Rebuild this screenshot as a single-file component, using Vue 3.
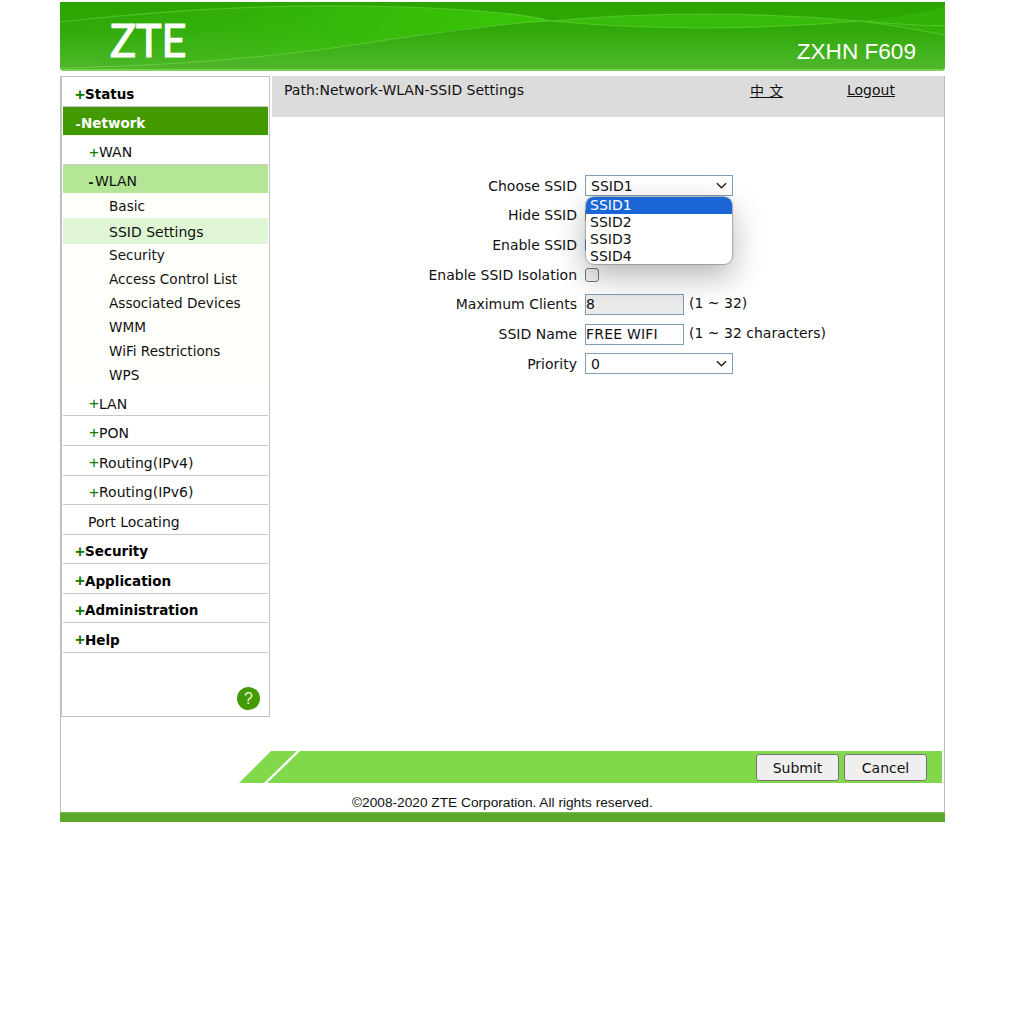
<script setup>
const topRows = [
  { label: 'Status', sign: '+', cls: 'lv1', h: 29 },
  { label: 'Network', sign: '-', cls: 'lv1 open', h: 29 },
  { label: 'WAN', sign: '+', cls: 'lv2', h: 29 },
  { label: 'WLAN', sign: '-', cls: 'lv2 open2', h: 28 },
]
const subRows = [
  { label: 'Basic', h: 25 },
  { label: 'SSID Settings', h: 26, cls: 'active' },
  { label: 'Security', h: 24, cls: 'lift' },
  { label: 'Access Control List', h: 24, cls: 'lift' },
  { label: 'Associated Devices', h: 24, cls: 'lift' },
  { label: 'WMM', h: 24, cls: 'lift' },
  { label: 'WiFi Restrictions', h: 24, cls: 'lift' },
  { label: 'WPS', h: 24, cls: 'lift' },
]
const lowRows = [
  { label: 'LAN', sign: '+', cls: 'lv2', h: 28 },
  { label: 'PON', sign: '+', cls: 'lv2', h: 30 },
  { label: 'Routing(IPv4)', sign: '+', cls: 'lv2', h: 30 },
  { label: 'Routing(IPv6)', sign: '+', cls: 'lv2', h: 29 },
  { label: 'Port Locating', sign: '', cls: 'lv2', h: 30 },
  { label: 'Security', sign: '+', cls: 'lv1', h: 29 },
  { label: 'Application', sign: '+', cls: 'lv1', h: 30 },
  { label: 'Administration', sign: '+', cls: 'lv1', h: 29 },
  { label: 'Help', sign: '+', cls: 'lv1', h: 30 },
]
const ssids = ['SSID1', 'SSID2', 'SSID3', 'SSID4']
</script>

<template>
  <div class="page">
    <header class="banner">
      <svg class="shine" viewBox="0 0 885 69" preserveAspectRatio="none" aria-hidden="true">
        <defs>
          <linearGradient id="bg" x1="0" y1="0" x2="0" y2="1">
            <stop offset="0" stop-color="#2aa500" />
            <stop offset="0.4" stop-color="#30aa0a" />
            <stop offset="1" stop-color="#52b82e" />
          </linearGradient>
          <linearGradient id="lens" x1="0" y1="0" x2="1" y2="0">
            <stop offset="0" stop-color="#3fb81a" stop-opacity="0" />
            <stop offset="0.7" stop-color="#38c008" stop-opacity=".85" />
            <stop offset="1" stop-color="#3ac60a" />
          </linearGradient>
          <clipPath id="round"><path d="M0 0H885V65Q885 69 881 69H4Q0 69 0 65Z" /></clipPath>
        </defs>
        <g clip-path="url(#round)">
          <path d="M0 0H885V69H0Z" fill="url(#bg)" />
          <path d="M0 20Q160 2 300 4T490 19Q400 24 300 42T0 66Z" fill="url(#lens)" />
          <path d="M490 19Q640 5 800 19Q640 33 490 19Z" fill="#3cc00e" opacity=".8" />
          <path d="M800 19Q850 14 885 5V33Q850 26 800 19Z" fill="#36b60a" opacity=".7" />
          <g fill="none" stroke="#86e05a" stroke-width="1.2" opacity=".4">
            <path d="M0 20Q160 2 300 4T490 19" />
            <path d="M0 66Q170 62 300 42T490 19" />
            <path d="M490 19Q640 5 800 19T885 5" />
            <path d="M490 19Q640 33 800 19Q850 26 885 33" />
          </g>
          <path d="M0 67H885V69H0Z" fill="#7cd152" />
        </g>
      </svg>
      <span class="logo">ZTE</span>
      <span class="model">ZXHN F609</span>
    </header>

    <div class="frame">
      <div class="main">
        <nav class="side">
          <div class="menu">
            <div v-for="r in topRows" :key="r.label" class="row" :class="r.cls" :style="{ height: r.h + 'px' }">
              <b class="sign">{{ r.sign }}</b>{{ r.label }}
            </div>
            <div
              v-for="r in subRows"
              :key="r.label"
              class="sub"
              :class="r.cls"
              :style="{ height: r.h + 'px' }"
            >{{ r.label }}</div>
            <div v-for="r in lowRows" :key="r.label" class="row" :class="r.cls" :style="{ height: r.h + 'px' }">
              <b class="sign">{{ r.sign }}</b>{{ r.label }}
            </div>
          </div>
          <div class="help"><span>?</span></div>
        </nav>

        <section class="content">
          <div class="path">
            <span class="crumb">Path:Network-WLAN-SSID Settings</span>
            <a class="lang">中 文</a>
            <a class="logout">Logout</a>
          </div>

          <div class="form">
            <div class="lab">Choose SSID</div>
            <div class="ctl pop-anchor">
              <div class="select"><span>SSID1</span><svg viewBox="0 0 12 7"><path d="M1 1l5 5 5-5" /></svg></div>
              <ul class="popup">
                <li v-for="(s, i) in ssids" :key="s" :class="{ sel: i === 0 }">{{ s }}</li>
              </ul>
            </div>
            <div class="lab">Hide SSID</div>
            <div class="ctl"><span class="check"></span></div>
            <div class="lab">Enable SSID</div>
            <div class="ctl"><span class="check on"></span></div>
            <div class="lab">Enable SSID Isolation</div>
            <div class="ctl"><span class="check"></span></div>
            <div class="lab">Maximum Clients</div>
            <div class="ctl"><span class="input off">8</span><span class="hint">(1 ~ 32)</span></div>
            <div class="lab">SSID Name</div>
            <div class="ctl"><span class="input">FREE WIFI</span><span class="hint">(1 ~ 32 characters)</span></div>
            <div class="lab">Priority</div>
            <div class="ctl">
              <div class="select"><span>0</span><svg viewBox="0 0 12 7"><path d="M1 1l5 5 5-5" /></svg></div>
            </div>
          </div>
        </section>
      </div>

      <div class="actions">
        <svg class="slant" viewBox="0 0 62 32" aria-hidden="true">
          <path d="M0 32L32 0H62V32Z" fill="#82d84b" />
          <path d="M26 32.5L60 -0.5" stroke="#fff" stroke-width="2.4" fill="none" />
        </svg>
        <div class="bar">
          <button class="btn" type="button">Submit</button>
          <button class="btn" type="button">Cancel</button>
        </div>
      </div>
      <p class="copy">©2008-2020 ZTE Corporation. All rights reserved.</p>
    </div>
    <div class="base"></div>
  </div>
</template>

<style>
html, body { margin: 0; background: #fff; }
</style>

<style scoped>
.page {
  box-sizing: border-box;
  width: 945px;
  padding: 2px 0 0 60px;
  font-family: "DejaVu Sans", Verdana, sans-serif;
  font-size: 14px;
  color: #111;
}
.banner {
  position: relative;
  display: flex;
  justify-content: space-between;
  height: 69px;
  color: #fff;
}
.shine { position: absolute; inset: 0; width: 100%; height: 100%; }
.logo {
  position: relative;
  margin: 10px 0 0 50px;
  font: 47px/54px "Lato", "Liberation Sans", sans-serif;
  -webkit-text-stroke: 1.2px #fff;
  transform: scaleX(.92);
  transform-origin: left;
}
.model {
  position: relative;
  margin: 36px 29px 0 0;
  font: 22.6px/28px "Liberation Sans", Arial, sans-serif;
}
.frame {
  margin-top: 5px;
  border-left: 1px solid #bdbdbd;
  border-right: 1px solid #bdbdbd;
  height: 736px;
  box-sizing: border-box;
}
.main { display: flex; gap: 2px; height: 641px; }
.side {
  box-sizing: border-box;
  display: flex;
  flex-direction: column;
  justify-content: space-between;
  width: 209px;
  height: 641px;
  border: 1px solid #c4c4c4;
  padding: 1px 1px 6px 1px;
  background: #fff;
}
.row {
  box-sizing: border-box;
  display: flex;
  align-items: center;
  border-bottom: 1px solid #c8c8c8;
}
.lv1 { padding: 4px 0 0 11px; font-weight: 700; color: #000; font-size: 13.5px; }
.lv2 { padding: 4px 0 0 25px; }
.sign {
  flex: none;
  width: 10px;
  color: #107a00;
  font-family: "Liberation Sans", Arial, sans-serif;
  font-size: 17px;
  font-weight: 700;
  line-height: 1;
  text-align: center;
}
.sign:empty { display: none; }
.lv1 .sign { margin-left: 1px; }
.lv2 .sign { margin-left: 1px; font-weight: 400; }
.open { background: #429900; color: #fff; border-bottom: 1px solid #eef6e8; }
.open .sign { width: 6px; color: #fff; font-size: 15px; }
.open2 { background: #b5e696; border-bottom: 0; }
.open2 .sign { width: 6px; margin: 0 1px 0 0; color: #111; font-size: 15px; font-weight: 700; }
.sub { box-sizing: border-box; display: flex; align-items: center; padding-left: 46px; background: #fffffb; font-size: 13.6px; }
.sub.active { background: #e0f5d4; padding-top: 2px; font-size: 14px; }
.sub.lift { padding-bottom: 2px; }
.help {
  align-self: flex-end;
  display: flex;
  align-items: center;
  justify-content: center;
  width: 23px;
  height: 23px;
  margin-right: 8px;
  border-radius: 50%;
  background: #429900;
  color: #e8f4e0;
  font: 400 16px/1 "Liberation Sans", sans-serif;
}
.content { flex: 1; min-width: 0; }
.path {
  box-sizing: border-box;
  display: flex;
  height: 41px;
  padding: 5px 0 0 12px;
  background: #dcdcdc;
  line-height: 18px;
}
.crumb { width: 466px; }
.lang { width: 97px; text-decoration: underline; font-family: "Noto Sans CJK SC", sans-serif; word-spacing: 2px; }
.logout { text-decoration: underline; }
.form {
  display: grid;
  grid-template-columns: 305px 1fr;
  column-gap: 8px;
  grid-auto-rows: 29.67px;
  margin-top: 54px;
}
.lab { display: flex; align-items: center; justify-content: flex-end; }
.ctl { display: flex; align-items: center; }
.pop-anchor { position: relative; }
.select {
  box-sizing: border-box;
  display: flex;
  align-items: center;
  justify-content: space-between;
  width: 148px;
  height: 21px;
  padding: 0 5px;
  border: 1px solid #7f9db9;
  background: #fff;
}
.select svg { width: 11px; height: 7px; fill: none; stroke: #222; stroke-width: 1.5; }
.popup {
  position: absolute;
  z-index: 2;
  top: 26px;
  left: 1px;
  width: 146px;
  height: 67px;
  margin: 0;
  padding: 0;
  list-style: none;
  overflow: hidden;
  border-radius: 8px;
  background: #fff;
  box-shadow: 0 0 1px 1px rgba(120, 120, 120, .55), 0 12px 32px rgba(0, 0, 0, .3);
  line-height: 17px;
}
.popup li { height: 17px; padding-left: 4px; }
.popup .sel { background: #1a66d6; color: #fff; }
.check {
  box-sizing: border-box;
  width: 14px;
  height: 14px;
  border: 1px solid #767676;
  border-radius: 3px;
  background: #f4f4f4;
}
.check.on { background: #1a66d6; border-color: #1a66d6; }
.input {
  box-sizing: border-box;
  width: 99px;
  height: 21px;
  border: 1px solid #7f9db9;
  line-height: 19px;
  letter-spacing: .2px;
  background: #fff;
}
.input.off { background: #ebebeb; }
.hint { margin: -3px 0 0 5px; }
.actions { display: flex; height: 32px; margin-top: 34px; padding-left: 178px; }
.slant { display: block; width: 62px; height: 32px; margin-right: -1px; }
.bar {
  flex: 1;
  display: flex;
  justify-content: flex-end;
  align-items: center;
  gap: 5px;
  margin-right: 2px;
  padding: 1px 15px 0 0;
  background: #82d84b;
}
.btn {
  box-sizing: border-box;
  width: 83px;
  height: 27px;
  border: 1px solid #767676;
  border-radius: 3px;
  background: #efefef;
  color: #111;
  font: inherit;
}
.copy {
  margin: 12px 0 0 291px;
  font: 13.7px/16px "Liberation Sans", Arial, sans-serif;
  color: #111;
}
.base { height: 10px; background: #5ba829; border-top: 1px solid #7dbb55; box-sizing: border-box; }
</style>
